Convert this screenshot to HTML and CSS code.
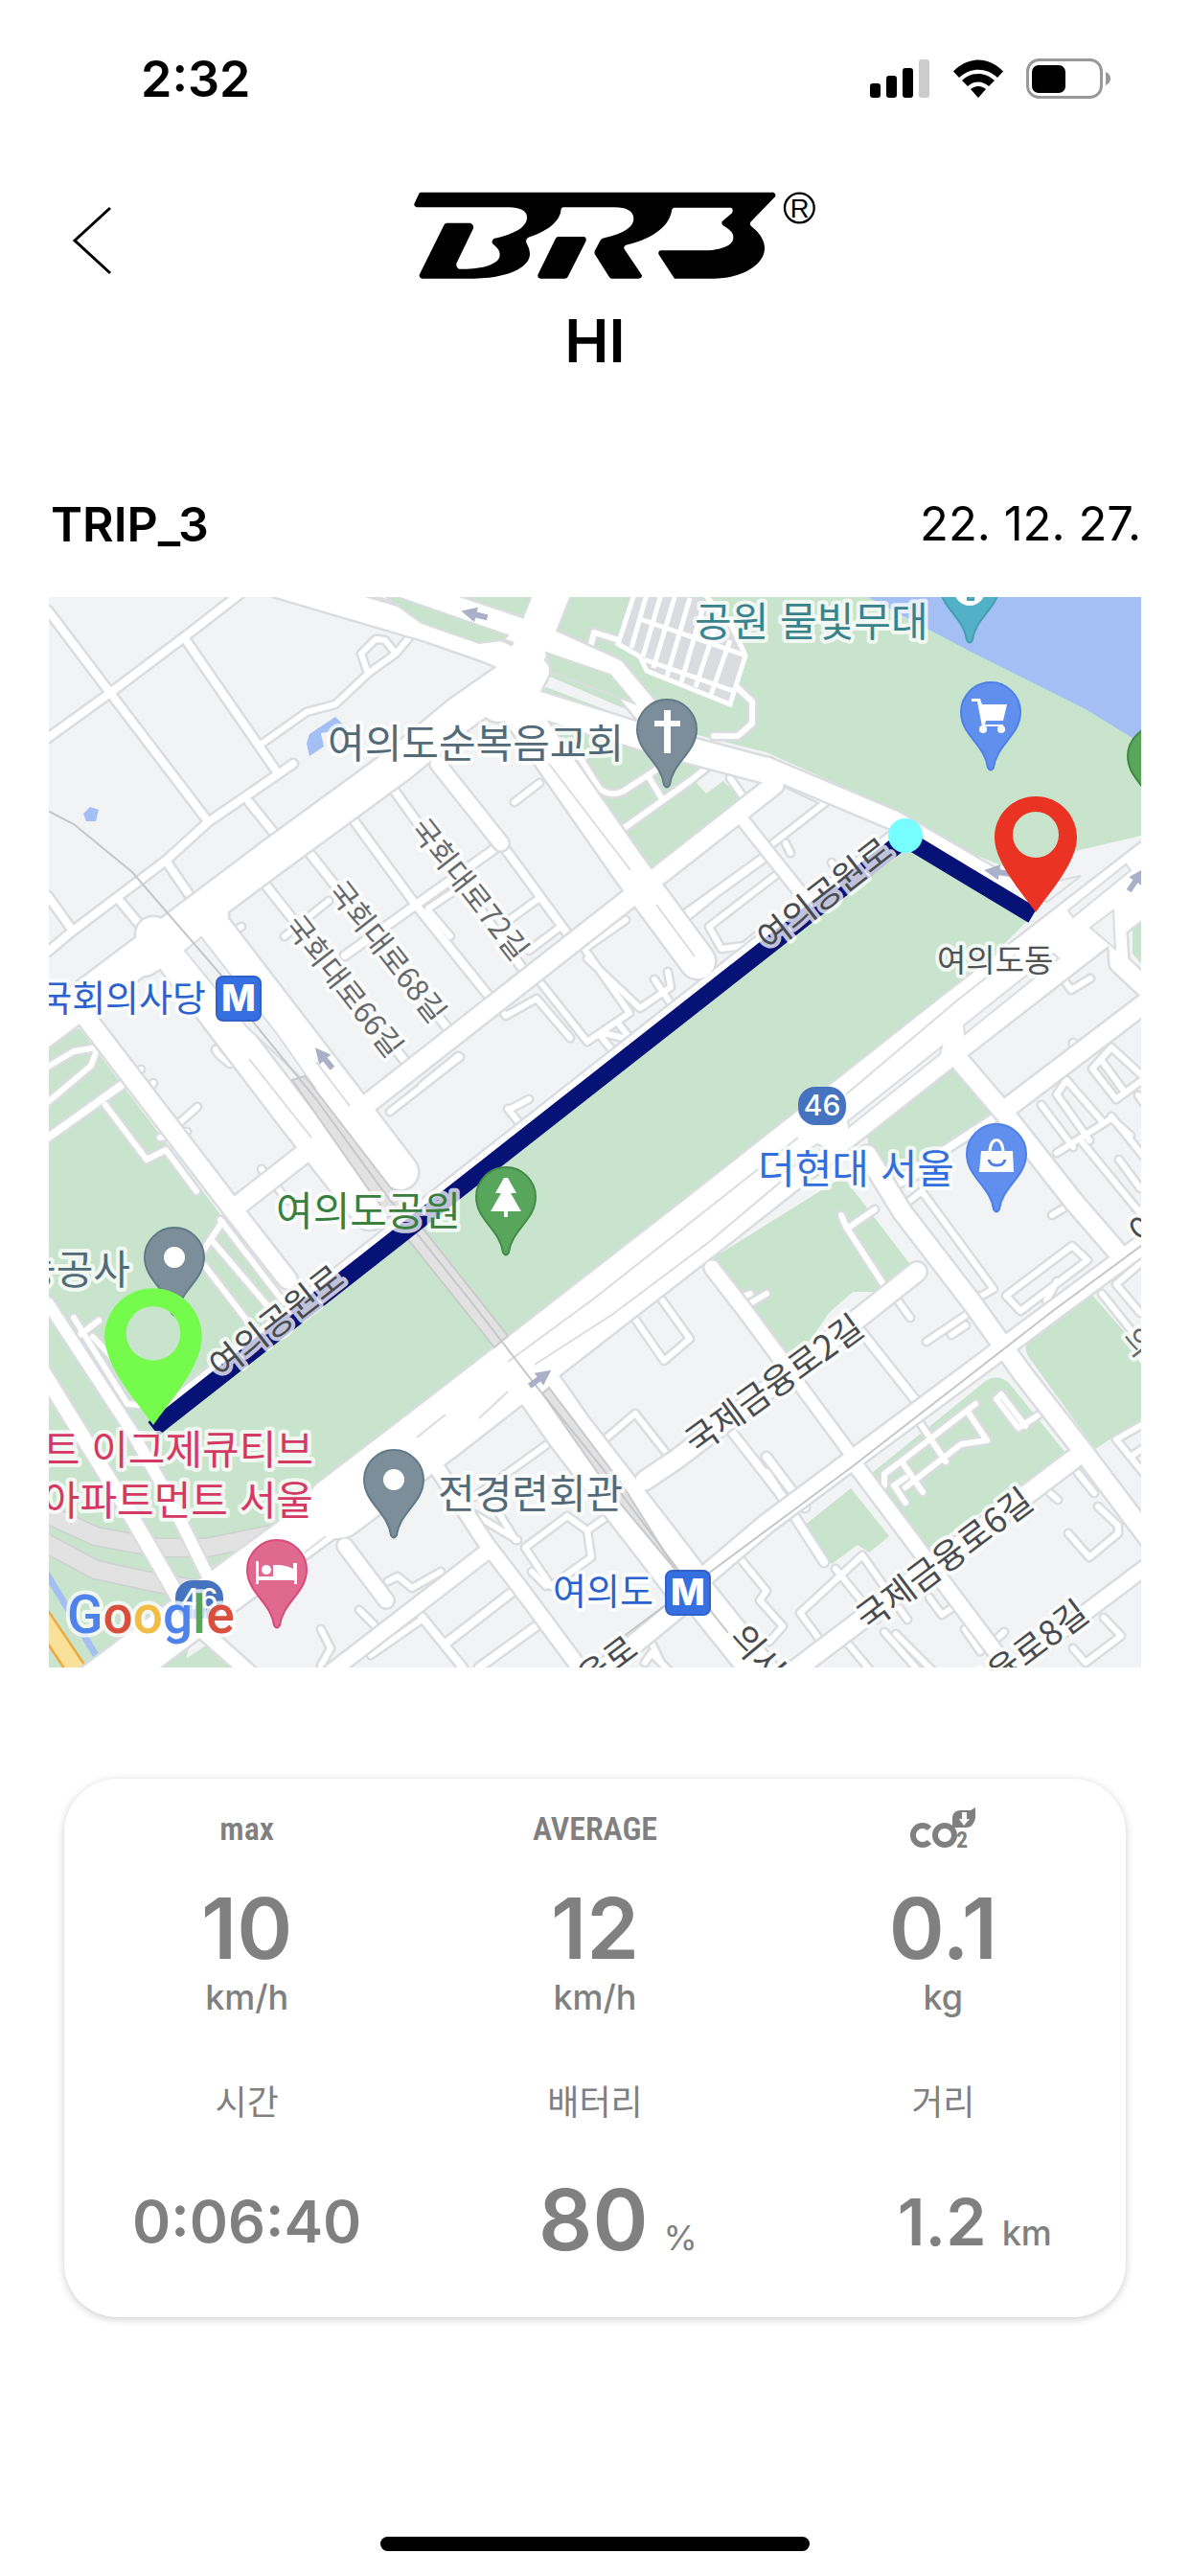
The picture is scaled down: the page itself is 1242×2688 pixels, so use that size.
FILE: index.html
```html
<!DOCTYPE html>
<html lang="ko">
<head>
  <meta charset="UTF-8" />
  <meta name="viewport" content="width=device-width, initial-scale=1" />
  <title>TRIP_3</title>
  <link rel="stylesheet" href="styles.css">
</head>
<body>

  <div class="status">
    <span class="time">2:32</span>
    <svg class="status-icons" viewBox="908 60 252 44" aria-hidden="true">
      <rect x="908" y="87" width="11" height="15" rx="3" />
      <rect x="925" y="79" width="11" height="23" rx="3" />
      <rect x="942" y="71" width="11" height="31" rx="3" />
      <rect x="959" y="62" width="11" height="40" rx="3" fill="#ccc" />
      <path d="M995 74.500C1010 58.500 1032 58.500 1047 74.500L1041 81C1030 70 1012 70 1001 81Z" />
      <path d="M1004 84C1014 74.500 1028 74.500 1038 84L1032 90C1025 84 1017 84 1010 90Z" />
      <path d="M1013 93C1018 89 1024 89 1029 93L1021 102Z" />
      <rect x="1072.500" y="62.500" width="77" height="39" rx="12" fill="none" stroke="#999" stroke-width="3" />
      <rect x="1077" y="68" width="35" height="29" rx="7" />
      <path d="M1154 75Q1159 77 1159 82T1154 89Z" fill="#999" />
    </svg>
  </div>

  <header class="topbar">
    <button class="back" aria-label="뒤로">
      <svg viewBox="0 0 44 72"><path d="M41 2L4 36L41 70" /></svg>
    </button>
    <div class="brand">
      <svg class="logo" viewBox="-30 60 1386 276" role="img" aria-label="BR3">
        <path d="M118 62H1222Q1231 66 1227 76L1150 155Q1146 162 1152 168C1180 190 1194 212 1194 238C1194 290 1120 332 1035 332H912L862 256Q860 245 870 244H1020C1065 240 1098 225 1096 203C1096 185 1085 180 1062 164Q1058 156 1062 152L1092 127Q1098 112 1088 110H910Q903 112 903 120C895 175 830 210 765 226Q750 230 755 240L810 322Q810 332 800 332H715Q710 332 706 325L662 255Q660 248 664 242L680 212Q684 206 692 205C740 195 784 175 784 145C784 120 760 109 725 109H565Q556 110 556 120C552 155 510 185 458 202Q445 206 448 220C456 235 459 245 459 256C459 300 380 332 285 332H122Q112 330 113 320L190 165Q193 158 200 158H272Q284 162 282 175L229 285Q228 300 238 302C300 304 365 290 365 258C365 240 352 232 342 223Q338 214 346 207C400 195 450 175 450 140C450 118 425 110 395 109H105Q95 107 97 98L112 66Q114 62 118 62Z" />
        <path d="M548 201H630Q638 206 634 216L578 326Q575 332 568 332H492Q482 330 484 320L540 206Q543 201 548 201Z" />
        <circle cx="1303" cy="111" r="46" fill="none" stroke="#000" stroke-width="7" />
        <text x="1304" y="141" font-size="82" text-anchor="middle">R</text>
      </svg>
      <h1>HI</h1>
    </div>
  </header>

  <main>
    <div class="trip-head">
      <h2>TRIP_3</h2>
      <time datetime="2022-12-27">22. 12. 27.</time>
    </div>

    <svg class="map" viewBox="51 623 1140 1117" role="img" aria-label="주행 경로 지도">
      <defs>
        <path id="pin" d="M0 -31C17 -31 31 -17 31 0C31 24 6 34 3 58Q0 63 -3 58C-6 34 -31 24 -31 0C-31 -17 -17 -31 0 -31Z" />
        <path id="marker" fill-rule="evenodd" d="M0 -43C24 -43 43 -24 43 0C43 26 14 58 0 78C-14 58 -43 26 -43 0C-43 -24 -24 -43 0 -43ZM0 -27A24 24 0 1 0 0 21A24 24 0 1 0 0 -27Z" />
        <path id="arrow" d="M-14 0L2 -8V-3H14V3H2V8Z" fill="#abb0c9" />
        <g id="rail-arc">
          <path d="M40 1576L100 1603L165 1615H215L290 1600" />
          <path d="M40 1606L100 1638L165 1652L215 1660" />
        </g>

        <!-- alleys and car parks -->
        <g id="minor">
          <g class="w6">
            <path d="M272 777L320 743L350 735L385 702L413 682L430 662M383 700L377 682L392 667L402 668L413 682" />
            <path d="M343 940L297 977M237 975L252 967M537 837L563 817M447 950L470 977M563 937L530 961M585 967L552 992M447 948L480 926" />
            <path d="M560 1020L613 1087L657 1057L610 990L653 960M613 1000L668 1052L700 1030L697 1014M683 1022L700 1047M630 1078L658 1085M647 1070L658 1084M626 1080L640 1097" />
            <path d="M520 1050L528 1060L560 1042L595 1083M530 1157L543 1173M533 1157L552 1147M407 1160L480 1103M440 1133L478 1102" />
            <path d="M740 967L810 913M740 967L753 990L777 987L800 968M803 883L862 837L820 817M820 880L825 890M868 900L874 910M717 957L742 937" />
            <path d="M620 660L750 700M620 660L615 680M762 812L776 832M605 790L625 822Q635 832 650 826L690 800M678 812L690 832M720 780L745 795L720 815L650 865" />
            <path d="M770 718L785 732V755L770 768H745" />
            <path d="M50 1113L77 1097L102 1093L95 1112L50 1150M110 1153L153 1210L173 1200L205 1243M142 1120L147 1116M157 1135L160 1130M180 1178L206 1155M167 1187L195 1181M273 1220L282 1232M290 1240L300 1253M225 1095Q226 1100 240 1110" />
            <path d="M230 1273L297 1360M220 1293L283 1367M213 1320L257 1377M232 1275L220 1293L207 1313M77 1375L133 1465L155 1467M103 1378L78 1397M97 1395L125 1425" />
            <path d="M570 1508L495 1562M592 1582L548 1615L575 1655L617 1625L613 1597L592 1582M613 1597L630 1585M570 1655L555 1640M495 1580L540 1607M520 1578L538 1607M630 1503L663 1475L700 1522M662 1375L693 1420L720 1397L690 1355" />
            <path d="M405 1650L415 1645L430 1657L460 1640M335 1700L345 1720L335 1738M375 1680L390 1695M387 1727L440 1690" />
            <path d="M773 1627L800 1660L793 1670L817 1697L803 1713M677 1708L690 1735M673 1735L680 1725L700 1745M835 1683L860 1717M900 1623L835 1683M872 1637L915 1690M900 1623L947 1690M923 1703L960 1745M885 1715L910 1745M935 1705L975 1745" />
            <path d="M957 1480L987 1525M1018 1465L943 1523L923 1538V1550M1010 1473L1030 1503L1003 1507L945 1552M943 1528L963 1557M933 1550L945 1568M933 1550L945 1542M1045 1455L1040 1460L1063 1490L1083 1477M1045 1455L1070 1488" />
            <path d="M1095 1557L1104 1565M1125 1537L1142 1558M1146 1572L1167 1592V1600L1137 1625L1115 1600M1035 1715L1048 1703M1007 1700L1023 1723M970 1667L983 1685L995 1677M1120 1720L1133 1735L1170 1707L1152 1688M1165 1502L1200 1482M1165 1502L1200 1545M1180 1520L1195 1510" />
            <path d="M967 1400L1007 1373M993 1393L1008 1383M937 1357L950 1375M883 1280L925 1345M878 1268L884 1282L913 1262M943 1258L962 1243L1037 1345L1023 1353L1003 1345M930 1240L960 1225M1098 1268L1118 1256M1119 1300L1135 1315L1065 1368L1050 1352L1119 1300M1103 1337L1092 1357" />
            <path d="M1087 1153L1120 1197M1103 1203L1160 1167L1180 1185M1113 1127L1103 1142L1137 1190M1113 1127L1152 1172M1128 1190L1200 1278M1160 1165L1200 1215M1168 1210L1190 1240M1160 1093L1140 1115L1165 1147L1195 1125L1160 1093M1150 1107L1172 1137M1120 1088V1095M1188 1143L1200 1160M1110 1022L1118 1033L1138 1021" />
            <path d="M775 1353L783 1350M783 1360L800 1350M658 1362L680 1345M1200 1310L1165 1340L1190 1370M1150 1350L1190 1400" />
          </g>
          <g class="w8">
            <path d="M50 637L115 723L217 857M50 770L115 723L192 665L250 620M192 665L290 807M50 993L75 972L173 898L217 858L306 797M50 935L75 970M260 837L285 868M173 898L197 933M125 940L150 970" />
            <path d="M277 923L425 1110M323 890L468 1074M367 853L433 943L513 1043M408 820L550 1017M600 985L523 880M520 883L360 997" />
            <path d="M717 953L800 893M1040 1165L925 1240M130 1130L50 1187M763 1493L823 1570M800 1537L860 1630M897 1387L957 1463M540 1657L465 1715M565 1693L500 1740M440 1687L483 1740M840 1573L800 1520" />
          </g>
        </g>

        <!-- streets -->
        <g id="major">
          <path class="w12" d="M773 853L800 887L850 950M50 1360L137 1493L175 1560L222 1655M777 1367L890 1520" />
          <path class="w14" d="M45 1432L130 1570L185 1665L215 1705L260 1745M455 1530L507 1610L540 1653L612 1750M360 1613L403 1670M507 1620L345 1745M457 797L523 880M743 1323L777 1367L820 1425M890 1525L965 1625L1055 1745M1200 1632L1050 1745" />
          <path class="w18" d="M90 1062L243 1262L300 1335M808 819L243 1262M1000 1105L1047 1160L1120 1253L1165 1305M905 1205L942 1265L1015 1360L1067 1433L1127 1510L1200 1607M673 1545L707 1522L840 1420L957 1327M735 1645L800 1590L890 1523L1033 1417L1100 1367L1200 1293M715 1672L620 1750M1120 1523L820 1750M1050 1157L1200 1043M1165 960L1168 1005L1200 1035M170 1477L938 873M800 800L933 856L1017 905L1070 935" />
          <path class="w26" d="M290 610L450 657L510 678L560 700M400 610L560 664L640 700L690 760M530 725L690 775L800 804M560 700L540 740" />
          <path class="w36" d="M40 1078L283 895L417 797L480 745L530 710M580 610L548 690L520 735M530 725L657 907L728 1003M182 1000L307 1164L386 1265M215 958L247 1000L357 1143L418 1223M160 975L200 1020M150 1000L220 955M710 1640L810 1765" />
          <path class="w44" d="M80 1775L240 1655L352 1573M550 1430L594 1493L690 1617L715 1650" />
          <path class="w64" d="M352 1573L462 1489L740 1273L1000 1068L1210 905" />
        </g>
      </defs>

      <rect x="51" y="623" width="1140" height="1117" fill="#f1f3f4" />

      <g fill="#c8e4cd">
        <path d="M350 610H1200V870L1050 905L1000 885L933 845L800 785L700 760L560 700L500 672L460 660Z" />
        <path d="M545 735L570 717L670 755L745 785L758 798L723 813L737 828L755 815L773 833L682 907L627 833Z" />
        <path d="M50 1087L83 1073L232 1270L300 1375L165 1493L945 875L1078 955L1030 1003L800 1183L550 1380L290 1587L215 1640L190 1750H50Z" />
        <path d="M905 1185L1000 1108L1038 1158L933 1233L907 1197Z" />
        <path d="M745 1312L880 1228L949 1318V1328L925 1348H890L865 1370L845 1400L822 1412Z" />
        <path d="M1137 1348L1073 1397Q1066 1408 1078 1422L1143 1512L1200 1475V1420Z" />
        <path d="M910 1537L1030 1440Q1042 1434 1053 1443L1113 1517L967 1617L910 1545Z" />
        <path d="M838 1593L888 1553L928 1603L907 1620L895 1612L868 1632Z" />
        <path d="M180 1740L218 1715L250 1740ZM1182 960H1195V1010L1182 995Z" />
      </g>
      <g fill="#a3bff4">
        <path d="M900 620L1013 680L1133 740L1182 770L1195 773V620Z" />
        <path d="M94 842L103 845L100 857H90L87 849ZM323 766L350 748L362 760L335 765L338 779L323 789L320 776Z" />
      </g>
      <path d="M45 1636L106 1737" stroke="#a3bff4" stroke-width="7" />
      <path d="M38 1680L85 1750" stroke="#eda93a" stroke-width="22" />
      <path d="M38 1680L85 1750" stroke="#f9e19a" stroke-width="17" />

      <use href="#rail-arc" class="rail-edge" />
      <use href="#rail-arc" class="rail-bed" />

      <use href="#minor" class="casing" />
      <use href="#minor" class="surface" />

      <path d="M657 623H730L775 665L780 685L770 715L760 738L673 702L668 690L645 670Z" fill="#dadce0" />
      <g stroke="#fff" stroke-width="5" fill="none">
        <path d="M662 620L645 672L668 685L675 700L762 735L778 684L762 650L735 620M668 646L778 684M672 688L768 722" />
        <path d="M675 620L659 676M690 620L671 685M705 620L682 697M720 624L696 706M734 633L711 712M748 650L726 717M762 668L742 725" />
      </g>

      <use href="#major" class="casing" />
      <use href="#major" class="surface" />

      <!-- islands between the lanes -->
      <g fill="#f1f3f4" stroke="#dadce0" stroke-width="2">
        <path d="M193 992L210 978L290 1080L330 1137L318 1128L258 1072Z" />
        <path d="M1006 1070L1100 995L1105 1000L1007 1079Z" />
        <path d="M885 1170L983 1092L981 1100L886 1176Z" />
        <path d="M1115 950L1175 902L1180 908L1120 957Z" />
        <path d="M1138 968L1162 950L1164 990Z" />
        <path d="M1085 938L1100 920L1128 914L1093 941Z" />
        <path d="M800 1227L853 1194L860 1197L805 1232Z" />
      </g>
      <g fill="#c8e4cd" stroke="#dadce0" stroke-width="2">
        <path d="M570 681L637 704L662 734L576 702Z" />
        <path d="M403 623H415L530 663L525 668L500 671L440 650Z" />
      </g>
      <path class="line" d="M573 797L658 908M685 944L725 998M260 1105L325 1187M330 1108L365 1154M530 1421L620 1355L833 1187M558 1424L640 1371L740 1296L815 1233M883 1142L1000 1043L1060 996M465 1476L435 1500M500 1480L530 1452M318 1620L340 1603" />

      <g fill="#e2e2e2" stroke="#c9cacb" stroke-width="2">
        <path d="M305 1127L318 1123L412 1245L530 1394L516 1406L388 1246Z" />
        <path d="M566 1454L573 1448L650 1550L705 1638L640 1560Z" />
      </g>
      <path class="subway" d="M50 846L77 860L138 910L233 1020L263 1065L330 1147L403 1247L493 1360L557 1443L627 1530L707 1637L760 1704M650 1708L735 1645L890 1530L1100 1367L1195 1297" />

      <use href="#arrow" transform="translate(495 641) rotate(14)" />
      <use href="#arrow" transform="translate(338 1104) rotate(50)" />
      <use href="#arrow" transform="translate(564 1438) rotate(144)" />
      <use href="#arrow" transform="translate(1041 910) rotate(8)" />
      <use href="#arrow" transform="translate(1186 918) rotate(124)" />

      <path class="route" d="M160 1491L945 875L1078 955" />

      <rect x="833" y="1134" width="50" height="40" rx="18" fill="#4673c0" />
      <text class="badge" x="858" y="1164">46</text>
      <rect x="183" y="1649" width="50" height="40" rx="18" fill="#4673c0" />
      <text class="badge" x="208" y="1679">46</text>

      <g class="place">
        <text x="342" y="791" fill="#536b78">여의도순복음교회</text>
        <text x="725" y="664" fill="#39838d">공원 물빛무대</text>
        <text x="791" y="1235" fill="#336ede">더현대 서울</text>
        <text x="288" y="1279" fill="#39803f">여의도공원</text>
        <text x="136" y="1340" fill="#536b78" text-anchor="end">기능공사</text>
        <text x="457" y="1574" fill="#536b78">전경련회관</text>
        <text x="327" y="1528" fill="#d63864" text-anchor="end">포인트 이그제큐티브</text>
        <text x="327" y="1581" fill="#d63864" text-anchor="end">아파트먼트 서울</text>
      </g>
      <g class="station">
        <text x="215" y="1055" text-anchor="end">국회의사당</text>
        <text x="577" y="1674">여의도</text>
      </g>
      <text class="district" x="978" y="1014">여의도동</text>
      <g class="street">
        <text transform="translate(231 1440) rotate(-38)">여의공원로</text>
        <text transform="translate(803 994) rotate(-38)">여의공원로</text>
        <text transform="translate(727 1519) rotate(-36)">국제금융로2길</text>
        <text transform="translate(906 1703) rotate(-37)">국제금융로6길</text>
        <text transform="translate(964 1820) rotate(-37)">국제금융로8길</text>
        <text transform="translate(536 1825) rotate(-37)">국제금융로</text>
        <text transform="translate(760 1709) rotate(50)">의사당대로</text>
        <text transform="translate(1170 1396) rotate(52)" class="lane">의사당대로</text>
        <text transform="translate(1191 1300) rotate(-38)">여의나루로</text>
      </g>
      <g class="street lane">
        <text transform="translate(427 865) rotate(52)">국회대로72길</text>
        <text transform="translate(341 930) rotate(52)">국회대로68길</text>
        <text transform="translate(296 966) rotate(52)">국회대로66길</text>
      </g>

      <g class="metro">
        <rect x="226" y="1019" width="46" height="46" rx="7" />
        <text x="249" y="1055">M</text>
        <rect x="695" y="1639" width="46" height="46" rx="7" />
        <text x="718" y="1675">M</text>
      </g>

      <g class="pins">
        <g transform="translate(696 761)" fill="#7b8e99" stroke="#607a87">
          <use href="#pin" /><path class="glyph" d="M-3 -20H4V-9H14V-3H4V25H-3V-3H-13V-9H-3Z" />
        </g>
        <g transform="translate(1034 743)" fill="#618fed" stroke="#4f80e8">
          <use href="#pin" />
          <path class="glyph" d="M-20 -14H-11L-9 -8H17L13 9H-5L-6 13H13V15H-9L-14 -11H-20Z" />
          <circle class="glyph" cx="-8" cy="18" r="4" /><circle class="glyph" cx="11" cy="18" r="4" />
        </g>
        <g transform="translate(1012 610)" fill="#53b1c7" stroke="#459fae">
          <use href="#pin" /><circle class="glyph" cy="6" r="16" /><path d="M-2 8V16H4V10" />
        </g>
        <g transform="translate(1208 789)" fill="#58a55c" stroke="#40893f"><use href="#pin" /></g>
        <g transform="translate(528 1249)" fill="#58a55c" stroke="#438b49">
          <use href="#pin" /><path class="glyph" d="M-2 -20H2L11 -4H5L16 15H2V21H-2V15H-16L-5 -4H-11Z" />
        </g>
        <g transform="translate(1040 1204)" fill="#618fed" stroke="#4f80e8">
          <use href="#pin" />
          <path class="glyph" d="M-16 -3H17L18 19H-18Z" />
          <path d="M-7 -1C-7 -19 7 -19 7 -1" fill="none" stroke="#fff" stroke-width="3" />
          <path d="M-8 6C-6 14 7 14 9 6" fill="none" stroke-width="3" />
        </g>
        <g transform="translate(182 1312)" fill="#7b8e99" stroke="#607a87"><use href="#pin" /><circle class="glyph" r="11" /></g>
        <g transform="translate(411 1544)" fill="#7b8e99" stroke="#607a87"><use href="#pin" /><circle class="glyph" r="11" /></g>
        <g transform="translate(289 1638)" fill="#df698f" stroke="#da4a78">
          <use href="#pin" />
          <path class="glyph" d="M-22 -9H-19V7H-4V-5H3Q12 -4 17 -1V-7H21V15H18V11H-19V15H-22Z" />
          <circle class="glyph" cx="-11" cy="0" r="5" />
        </g>
      </g>

      <circle cx="945" cy="872" r="18" fill="#76fdfe" />
      <use href="#marker" transform="translate(1081 874)" fill="#ea3323" />
      <use href="#marker" transform="translate(160 1395) scale(1.180)" fill="#75fb4c" />

      <text class="google" x="70" y="1704"><tspan fill="#4f83ec">G</tspan><tspan fill="#d84f3d">o</tspan><tspan fill="#f2bd42">o</tspan><tspan fill="#4f83ec">g</tspan><tspan fill="#58a55c">l</tspan><tspan fill="#d84f3d">e</tspan></text>
    </svg>

    <section class="stats">
      <div class="stat">
        <h3>max</h3>
        <p class="value">10</p>
        <p class="unit">km/h</p>
      </div>
      <div class="stat">
        <h3>AVERAGE</h3>
        <p class="value">12</p>
        <p class="unit">km/h</p>
      </div>
      <div class="stat">
        <h3>
          <svg class="co2" viewBox="950 1886 68 44" role="img" aria-label="CO2">
            <path d="M970 1908A10 10 0 1 0 970 1922" />
            <circle cx="986" cy="1915" r="10" />
            <path class="leaf" d="M994 1907V1896Q995 1889 1003 1889H1013L1018 1886V1897Q1016 1907 1008 1907Z" />
            <path class="down" d="M1004 1891H1009V1898H1012L1006 1905L1001 1898H1004Z" />
            <text x="998" y="1928">2</text>
          </svg>
        </h3>
        <p class="value">0.1</p>
        <p class="unit">kg</p>
      </div>
      <div class="stat">
        <h4>시간</h4>
        <p class="row"><span class="clock">0:06:40</span></p>
      </div>
      <div class="stat">
        <h4>배터리</h4>
        <p class="row pct"><span class="value">80</span><span class="unit thin">%</span></p>
      </div>
      <div class="stat">
        <h4>거리</h4>
        <p class="row dist"><span class="distance">1.2</span><span class="unit">km</span></p>
      </div>
    </section>
  </main>

  <div class="home-bar"></div>

</body>
</html>
```
FILE: styles.css
```css
* { box-sizing: border-box; }
body {
  margin: 0;
  min-height: 100vh;
  display: flex;
  flex-direction: column;
  background: #fff;
  color: #000;
  font-family: Inter, "Noto Sans CJK KR", sans-serif;
}
h1, h2, h3, h4, p { margin: 0; }

.status {
  display: flex;
  justify-content: space-between;
  align-items: center;
  height: 164px;
  padding: 0 82px 0 147px;
}
.time { font-size: 52px; font-weight: 600; }
.status-icons { width: 252px; height: 44px; }

.topbar {
  display: grid;
  grid-template-columns: 1fr auto 1fr;
  padding: 36px 74px 0;
}
.back {
  align-self: start;
  justify-self: start;
  margin-top: 15px;
  padding: 0;
  border: 0;
  background: none;
}
.back svg { display: block; width: 44px; height: 72px; }
.back path { fill: none; stroke: #000; stroke-width: 3px; }
.brand { display: flex; flex-direction: column; align-items: center; }
.logo { width: 462px; height: 92px; font-family: "Liberation Sans", sans-serif; }
h1 { margin-top: 24px; font-size: 62px; line-height: 80px; font-weight: 600; }

main { display: flex; flex-direction: column; flex: 1; }
.trip-head {
  display: flex;
  justify-content: space-between;
  align-items: center;
  padding: 121px 51px 46px 53px;
  font-size: 49px;
  line-height: 60px;
}
h2 { font-size: 50px; font-weight: 600; }
.map { display: block; width: auto; margin: 0 51px; }

/* roads: one geometry, drawn twice */
.casing { stroke: #dadce0; --edge: 5px; }
.surface { stroke: #fff; --edge: 0px; }
#minor, #major { fill: none; stroke-linecap: round; stroke-linejoin: round; }
.w6 { stroke-width: calc(6px + var(--edge)); }
.w8 { stroke-width: calc(8px + var(--edge)); }
.w12 { stroke-width: calc(12px + var(--edge)); }
.w14 { stroke-width: calc(15px + var(--edge)); }
.w18 { stroke-width: calc(19px + var(--edge)); }
.w26 { stroke-width: calc(26px + var(--edge)); }
.w36 { stroke-width: calc(36px + var(--edge)); }
.w44 { stroke-width: calc(48px + var(--edge)); }
.w64 { stroke-width: calc(64px + var(--edge)); }
.line { fill: none; stroke: #dadce0; stroke-width: 2px; }
.subway { fill: none; stroke: #c4c6c9; stroke-width: 2px; }
.rail-edge { fill: none; stroke: #cfd0d0; stroke-width: 21px; }
.rail-bed { fill: none; stroke: #e2e2e2; stroke-width: 18px; }
.route { fill: none; stroke: #071277; stroke-width: 18px; }

.place, .station, .district, .street, .google {
  paint-order: stroke;
  stroke: rgba(255, 255, 255, 0.75);
  stroke-width: 8px;
  stroke-linejoin: round;
  font-family: "Noto Sans CJK KR", sans-serif;
}
.place { font-size: 42px; }
.station { font-size: 38px; fill: #2a62cf; }
.district { font-size: 33px; fill: #505356; }
.street { font-size: 36px; fill: #494c4f; }
.lane { font-size: 31px; fill: #66696c; }
.badge { fill: #fff; font-size: 30px; font-weight: 500; text-anchor: middle; }
.metro rect { fill: #3670e0; stroke: #3060c8; stroke-width: 2px; }
.metro text { fill: #fff; font-size: 38px; font-weight: 800; text-anchor: middle; }
.pins { stroke-width: 2px; }
.glyph { fill: #fff; stroke: none; }
.google { font-family: Roboto, sans-serif; font-size: 55px; font-weight: 500; }

.stats {
  display: grid;
  grid-template-columns: repeat(3, 1fr);
  margin: 116px 67px 0;
  padding: 30px 9px 52px;
  border-radius: 56px;
  box-shadow: 0 2px 8px rgba(0, 0, 0, 0.2);
  color: #808080;
  text-align: center;
}
h3 {
  display: flex;
  justify-content: center;
  align-items: center;
  height: 44px;
  font-family: "Roboto Condensed", "Liberation Sans Narrow", sans-serif;
  font-size: 34px;
  font-weight: 600;
}
.co2 { width: 68px; height: 44px; fill: none; stroke: #808080; stroke-width: 6px; }
.co2 .leaf { fill: #808080; stroke: none; }
.co2 .down { fill: #fff; stroke: none; }
.co2 text { fill: #808080; stroke: none; font-size: 24px; font-weight: 700; }
.value { font-size: 88px; line-height: 100px; font-weight: 600; }
h3 + .value { margin-top: 32px; }
.unit { font-size: 36px; line-height: 44px; font-weight: 500; }
.thin { font-weight: 400; }
h4 { margin-top: 62px; font-size: 36px; line-height: 52px; font-weight: 400; }
.row {
  display: flex;
  justify-content: center;
  align-items: baseline;
  gap: 16px;
  height: 100px;
  margin-top: 46px;
}
.clock { font-size: 61px; line-height: 104px; font-weight: 600; }
.distance { font-size: 68px; line-height: 104px; font-weight: 600; }
.pct { padding-left: 48px; }
.dist { padding-left: 66px; }

.home-bar {
  align-self: center;
  width: 36%;
  height: 15px;
  margin-bottom: 26px;
  border-radius: 8px;
  background: #000;
}
```
